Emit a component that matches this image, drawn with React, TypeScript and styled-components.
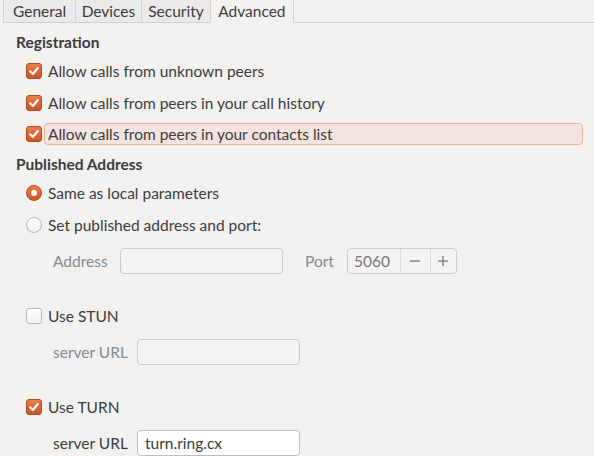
import styled, { createGlobalStyle } from "styled-components";

const GlobalStyle = createGlobalStyle`
  html, body {
    margin: 0;
    padding: 0;
    background: #f2f1f0;
  }
  body {
    width: 594px;
    height: 456px;
    overflow: hidden;
    font-family: "Lato", "Noto Sans", sans-serif;
    font-size: 15.5px;
    color: #3c3c3c;
  }
`;

const Page = styled.div`
  width: 594px;
  height: 456px;
  display: flex;
  flex-direction: column;
  overflow: hidden;
`;

const TabBar = styled.div`
  display: flex;
  height: 23px;
  padding-left: 3px;
  box-sizing: border-box;
`;

const Tab = styled.div<{ $active?: boolean; $pad?: number }>`
  display: flex;
  align-items: center;
  justify-content: center;
  padding: 0 ${(p) => p.$pad ?? 7}px;
  height: 23px;
  box-sizing: border-box;
  background: ${(p) => (p.$active ? "#f2f1f0" : "#ebeae8")};
  border-left: 1px solid #d3d1ce;
  border-bottom: 1px solid ${(p) => (p.$active ? "transparent" : "#d3d1ce")};
  border-right: ${(p) => (p.$active ? "1px solid #d3d1ce" : "none")};
  color: #3c3c3c;
`;

const TabFill = styled.div`
  flex: 1;
  border-bottom: 1px solid #d3d1ce;
`;

const Content = styled.div`
  display: flex;
  flex-direction: column;
  padding: 8px 11px 0 16px;
`;

const Heading = styled.div<{ $top?: number }>`
  height: 22px;
  display: flex;
  align-items: center;
  font-weight: bold;
  margin-top: ${(p) => p.$top ?? 0}px;
`;

const Group = styled.div<{ $top: number; $gap: number }>`
  display: flex;
  flex-direction: column;
  gap: ${(p) => p.$gap}px;
  margin-top: ${(p) => p.$top}px;
`;

const OptionRow = styled.div`
  display: flex;
  align-items: center;
  height: 22px;
  padding-left: 10px;
`;

const Box = styled.span<{ $checked?: boolean; $round?: boolean }>`
  width: 16px;
  height: 16px;
  box-sizing: border-box;
  flex: none;
  border-radius: ${(p) => (p.$round ? "50%" : "3px")};
  border: 1px solid ${(p) => (p.$checked ? "#b04a20" : "#b7b5b2")};
  background: ${(p) =>
    p.$checked
      ? "linear-gradient(#ec7d4e, #cf5327)"
      : "linear-gradient(#ffffff, #f1f0ef)"};
  display: flex;
  align-items: center;
  justify-content: center;
`;

const Dot = styled.span`
  width: 6px;
  height: 6px;
  border-radius: 50%;
  background: #ffffff;
`;

const OptionLabel = styled.span<{ $focus?: boolean }>`
  margin-left: 2px;
  padding: 0 3px;
  height: 22px;
  display: flex;
  align-items: center;
  box-sizing: border-box;
  border-radius: 4px;
  border: 1px solid ${(p) => (p.$focus ? "#f0b096" : "transparent")};
  background: ${(p) => (p.$focus ? "#f3e3de" : "transparent")};
  flex: ${(p) => (p.$focus ? 1 : "none")};
`;

const FieldRow = styled.div`
  display: flex;
  align-items: center;
  height: 26px;
  padding-left: 37px;
`;

const FieldLabel = styled.span<{ $dim?: boolean; $width: number }>`
  width: ${(p) => p.$width}px;
  color: ${(p) => (p.$dim ? "#7f8b95" : "#3c3c3c")};
`;

const Entry = styled.div<{ $dim?: boolean; $gap?: number }>`
  width: 163px;
  height: 26px;
  box-sizing: border-box;
  border-radius: 4px;
  border: 1px solid ${(p) => (p.$dim ? "#cdcbc8" : "#bfbdba")};
  background: ${(p) => (p.$dim ? "#f4f3f2" : "#ffffff")};
  display: flex;
  align-items: center;
  padding-left: 7px;
  color: #3c3c3c;
  margin-right: ${(p) => p.$gap ?? 0}px;
`;

const Spin = styled.div`
  display: flex;
  height: 26px;
  width: 110px;
  box-sizing: border-box;
  border: 1px solid #cdcbc8;
  border-radius: 4px;
  background: #f4f3f2;
  margin-left: 13px;
`;

const SpinValue = styled.div`
  width: 53px;
  display: flex;
  align-items: center;
  padding-left: 6px;
  box-sizing: border-box;
  color: #767676;
`;

const SpinButton = styled.div<{ $w: number }>`
  width: ${(p) => p.$w}px;
  border-left: 1px solid #dcdad7;
  display: flex;
  align-items: center;
  justify-content: center;
`;

const Check = () => (
  <svg width="12" height="12" viewBox="0 0 12 12">
    <path
      d="M2.2 6.4 L4.9 9 L9.8 3"
      fill="none"
      stroke="#ffffff"
      strokeWidth="2.2"
      strokeLinecap="round"
      strokeLinejoin="round"
    />
  </svg>
);

const Minus = () => (
  <svg width="12" height="12" viewBox="0 0 12 12">
    <path d="M1 6 H11" stroke="#8a8a8a" strokeWidth="1.6" />
  </svg>
);

const Plus = () => (
  <svg width="12" height="12" viewBox="0 0 12 12">
    <path d="M1 6 H11 M6 1 V11" stroke="#8a8a8a" strokeWidth="1.6" />
  </svg>
);

const CheckOption = ({
  label,
  checked,
  focus,
}: {
  label: string;
  checked?: boolean;
  focus?: boolean;
}) => (
  <OptionRow>
    <Box $checked={checked}>{checked && <Check />}</Box>
    <OptionLabel $focus={focus}>{label}</OptionLabel>
  </OptionRow>
);

const RadioOption = ({ label, checked }: { label: string; checked?: boolean }) => (
  <OptionRow>
    <Box $round $checked={checked}>
      {checked && <Dot />}
    </Box>
    <OptionLabel>{label}</OptionLabel>
  </OptionRow>
);

export default function App() {
  return (
    <Page>
      <GlobalStyle />
      <TabBar>
        <Tab $pad={9}>General</Tab>
        <Tab $pad={5.5}>Devices</Tab>
        <Tab $pad={6.5}>Security</Tab>
        <Tab $active $pad={7}>Advanced</Tab>
        <TabFill />
      </TabBar>
      <Content>
        <Heading>Registration</Heading>
        <Group $top={7} $gap={9.5}>
          <CheckOption label="Allow calls from unknown peers" checked />
          <CheckOption label="Allow calls from peers in your call history" checked />
          <CheckOption label="Allow calls from peers in your contacts list" checked focus />
        </Group>
        <Heading $top={8}>Published Address</Heading>
        <Group $top={7} $gap={10}>
          <RadioOption label="Same as local parameters" checked />
          <RadioOption label="Set published address and port:" />
        </Group>
        <Group $top={12} $gap={0}>
          <FieldRow>
            <FieldLabel $dim $width={67}>Address</FieldLabel>
            <Entry $dim $gap={22} />
            <FieldLabel $dim $width={29}>Port</FieldLabel>
            <Spin>
              <SpinValue>5060</SpinValue>
              <SpinButton $w={29}>
                <Minus />
              </SpinButton>
              <SpinButton $w={26}>
                <Plus />
              </SpinButton>
            </Spin>
          </FieldRow>
        </Group>
        <Group $top={31} $gap={12}>
          <CheckOption label="Use STUN" />
          <FieldRow>
            <FieldLabel $dim $width={84}>server URL</FieldLabel>
            <Entry $dim />
          </FieldRow>
        </Group>
        <Group $top={31} $gap={12}>
          <CheckOption label="Use TURN" checked />
          <FieldRow>
            <FieldLabel $width={84}>server URL</FieldLabel>
            <Entry>turn.ring.cx</Entry>
          </FieldRow>
        </Group>
      </Content>
    </Page>
  );
}
